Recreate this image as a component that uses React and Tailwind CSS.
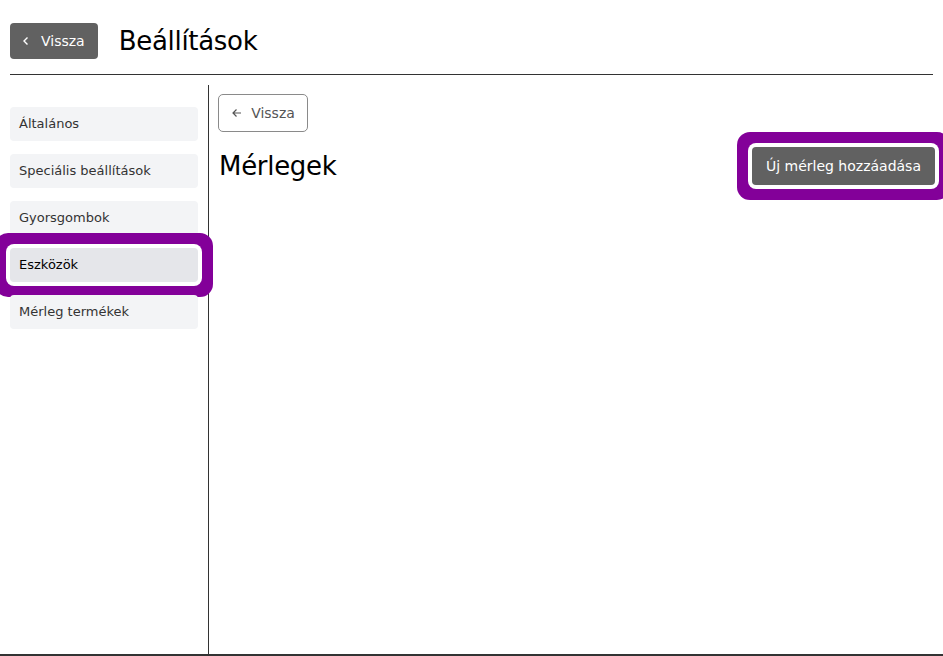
import React from "react";

const menu = [
  { label: "Általános" },
  { label: "Speciális beállítások" },
  { label: "Gyorsgombok" },
  { label: "Eszközök", active: true },
  { label: "Mérleg termékek" },
];

const ChevronLeft = () => (
  <svg width="12" height="12" viewBox="0 0 12 12" fill="none" stroke="currentColor" strokeWidth="1.4">
    <path d="M7.5 2.5 4 6l3.5 3.5" />
  </svg>
);

const ArrowLeft = () => (
  <svg width="12" height="12" viewBox="0 0 12 12" fill="none" stroke="currentColor" strokeWidth="1.2">
    <path d="M10 6H2M5.5 2.5 2 6l3.5 3.5" />
  </svg>
);

export default function App() {
  return (
    <div
      className="flex h-[656px] w-full flex-col overflow-hidden border-b-2 border-[#333] bg-white text-[#111]"
      style={{ fontFamily: '"DejaVu Sans", "Noto Sans", sans-serif' }}
    >
      {/* header */}
      <div className="mx-[10px] flex items-center gap-[21px] border-b border-[#333] pt-[23px] pb-[15px]">
        <button className="flex h-[36px] items-center gap-[9px] rounded-[4px] bg-[#616161] pl-[10px] pr-[13px] text-[14px] text-white">
          <ChevronLeft />
          <span>Vissza</span>
        </button>
        <h1 className="text-[26px] leading-none tracking-[-0.3px] text-black">Beállítások</h1>
      </div>

      <div className="mt-[10px] flex flex-1">
        {/* sidebar */}
        <div className="flex w-[209px] shrink-0 flex-col gap-[13px] border-r border-[#333] pt-[22px] pl-[10px] pr-[10px]">
          {menu.map((m) => (
            <div
              key={m.label}
              className={
                m.active
                  ? "flex h-[34px] items-center rounded-[4px] bg-[#e5e6ea] px-[9px] text-[13px] text-black shadow-[0_0_0_4px_#fff,0_0_0_15px_#830099]"
                  : "flex h-[34px] items-center rounded-[4px] bg-[#f3f4f6] px-[9px] text-[13px] text-[#333]"
              }
            >
              {m.label}
            </div>
          ))}
        </div>

        {/* content */}
        <div className="flex flex-1 flex-col pt-[9px] pl-[9px] pr-[8px]">
          <button className="flex h-[38px] w-[90px] items-center justify-center gap-[8px] rounded-[5px] border border-[#8a8a8a] text-[14px] text-[#555]">
            <ArrowLeft />
            <span>Vissza</span>
          </button>
          <div className="mt-[15px] flex items-center justify-between">
            <h2 className="pl-[1px] text-[26px] leading-none tracking-[-0.3px] text-black">Mérlegek</h2>
            <button className="h-[38px] rounded-[4px] bg-[#616161] px-[14px] text-[14px] text-white shadow-[0_0_0_4px_#fff,0_0_0_15px_#830099]">
              Új mérleg hozzáadása
            </button>
          </div>
        </div>
      </div>
    </div>
  );
}
